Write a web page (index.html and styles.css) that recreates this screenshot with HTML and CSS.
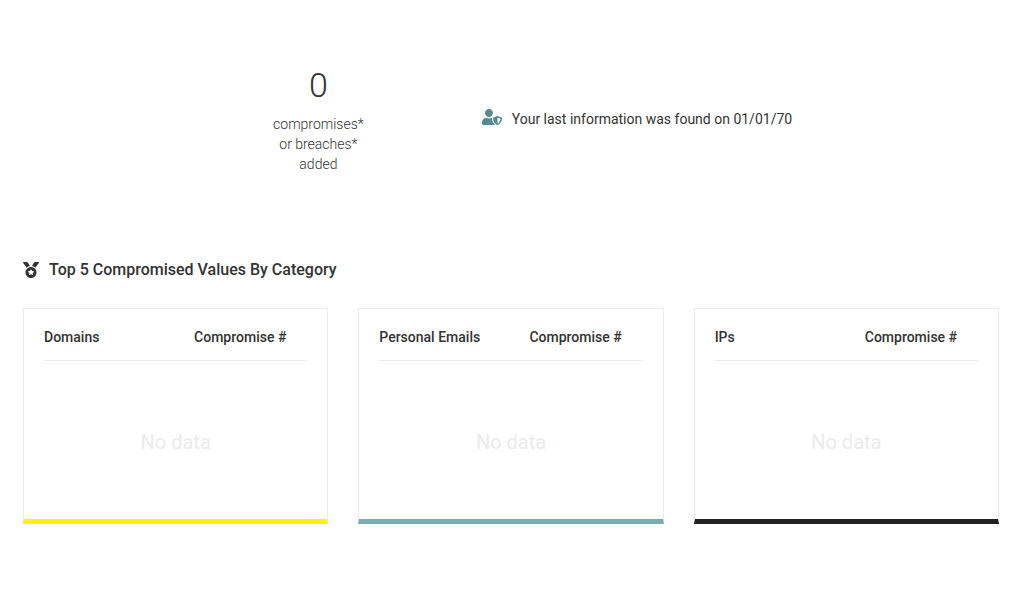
FILE: index.html
```html
<!DOCTYPE html>
<html lang="en">
<head>
    <meta charset="UTF-8">
    <meta name="viewport" content="width=device-width, initial-scale=1.0">
    <title>Compromise Summary</title>
    <link rel="stylesheet" href="styles.css">
</head>
<body>
    <main class="container">
        <section class="overview">
            <div class="stat">
                <div class="stat-value">0</div>
                <div class="stat-label">compromises*<br>or breaches*<br>added</div>
            </div>
            <p class="last-found">
                <svg class="icon-user" viewBox="0 0 640 512" aria-hidden="true">
                    <path fill="currentColor" d="M622.300 271.100l-115.200-45c-4.100-1.600-12.600-3.700-22.200 0l-115.200 45c-10.700 4.200-17.700 14-17.700 24.900 0 111.600 68.700 188.800 132.900 213.900 9.600 3.700 18 1.600 22.200 0C558.400 489.900 640 420.500 640 296c0-10.900-7-20.700-17.700-24.900zM496 462.400V273.300l95.500 37.300c-5.600 87.100-60.900 135.400-95.500 151.800zM224 256c70.700 0 128-57.300 128-128S294.700 0 224 0 96 57.300 96 128s57.300 128 128 128zm96 40c0-2.500.8-4.800 1.100-7.200-2.500-.1-4.900-.8-7.500-.8h-16.700c-22.200 10.200-46.900 16-72.900 16s-50.600-5.800-72.900-16h-16.700C60.200 288 0 348.200 0 422.400V464c0 26.500 21.500 48 48 48h352c6.800 0 13.300-1.500 19.200-4-54-42.900-99.200-116.700-99.200-212z"/>
                </svg>
                <span>Your last information was found on 01/01/70</span>
            </p>
        </section>

        <section>
            <h1 class="section-title">
                <svg class="icon-medal" viewBox="0 0 512 512" aria-hidden="true">
                    <path fill="currentColor" d="M223.750 130.750L154.620 15.540A31.997 31.997 0 0 0 127.180 0H16.030C3.080 0-4.500 14.570 2.920 25.180l111.270 158.960c29.720-27.770 67.520-46.830 109.560-53.390zM495.970 0H384.820c-11.240 0-21.660 5.900-27.440 15.540l-69.130 115.210c42.040 6.560 79.840 25.620 109.560 53.380L509.080 25.180C516.500 14.570 508.920 0 495.970 0zM256 160c-97.200 0-176 78.800-176 176s78.800 176 176 176 176-78.800 176-176-78.800-176-176-176zm92.520 157.260l-37.930 36.960 8.970 52.220c1.600 9.360-8.260 16.510-16.650 12.090L256 393.880l-46.900 24.650c-8.400 4.450-18.250-2.740-16.650-12.090l8.970-52.220-37.930-36.960c-6.820-6.640-3.050-18.230 6.350-19.590l52.430-7.640 23.430-47.520c2.110-4.280 6.190-6.390 10.280-6.390 4.110 0 8.220 2.140 10.330 6.390l23.430 47.520 52.430 7.640c9.400 1.360 13.170 12.950 6.350 19.590z"/>
                </svg>
                <span>Top 5 Compromised Values By Category</span>
            </h1>
            <div class="cards">
                <div class="card card-domains">
                    <table>
                        <thead>
                            <tr><th>Domains</th><th>Compromise #</th></tr>
                        </thead>
                    </table>
                    <p class="no-data">No data</p>
                </div>
                <div class="card card-emails">
                    <table>
                        <thead>
                            <tr><th>Personal Emails</th><th>Compromise #</th></tr>
                        </thead>
                    </table>
                    <p class="no-data">No data</p>
                </div>
                <div class="card card-ips">
                    <table>
                        <thead>
                            <tr><th>IPs</th><th>Compromise #</th></tr>
                        </thead>
                    </table>
                    <p class="no-data">No data</p>
                </div>
            </div>
        </section>
    </main>
</body>
</html>
```
FILE: styles.css
```css
body {
    font-family: Roboto, "Liberation Sans", sans-serif;
    background-color: #fff;
    color: #333;
    margin: 0;
}
.container {
    padding: 64px 21px 64px 23px;
}
.overview {
    display: grid;
    grid-template-columns: 47% 1fr;
    align-items: center;
    margin-bottom: 84px;
}
.stat {
    justify-self: end;
    margin-right: 118px;
    text-align: center;
}
.stat-value {
    font-size: 34px;
    font-weight: 300;
    line-height: 42px;
    margin-bottom: 8px;
}
.stat-label {
    font-size: 14px;
    font-weight: 300;
    line-height: 20px;
}
.last-found {
    display: flex;
    align-items: flex-start;
    gap: 10px;
    margin: 0;
    font-size: 14px;
    line-height: 20px;
}
.icon-user {
    width: 20px;
    height: 16px;
    color: #568a90;
}
.section-title {
    display: flex;
    align-items: center;
    gap: 10px;
    margin: 0 0 26px;
    font-size: 16px;
    font-weight: 500;
    line-height: 24px;
}
.icon-medal {
    width: 16px;
    height: 16px;
}
.cards {
    display: grid;
    grid-template-columns: repeat(3, 1fr);
    gap: 30px;
}
.card {
    box-sizing: border-box;
    min-height: 216px;
    padding: 8px 20px 0;
    border: 1px solid #ebebeb;
    border-bottom-width: 5px;
}
.card-domains {
    border-bottom-color: #fff10a;
}
.card-emails {
    border-bottom-color: #7badb3;
}
.card-ips {
    border-bottom-color: #222;
}
table {
    width: 100%;
    table-layout: fixed;
    border-collapse: collapse;
}
th {
    padding: 10px 0 13px;
    border-bottom: 1px solid #ebebeb;
    font-size: 14px;
    font-weight: 500;
    line-height: 20px;
    text-align: left;
}
th:first-child {
    width: 57%;
}
.no-data {
    margin: 67px 0 0;
    color: #ebebeb;
    font-size: 20px;
    line-height: 28px;
    text-align: center;
}
```
